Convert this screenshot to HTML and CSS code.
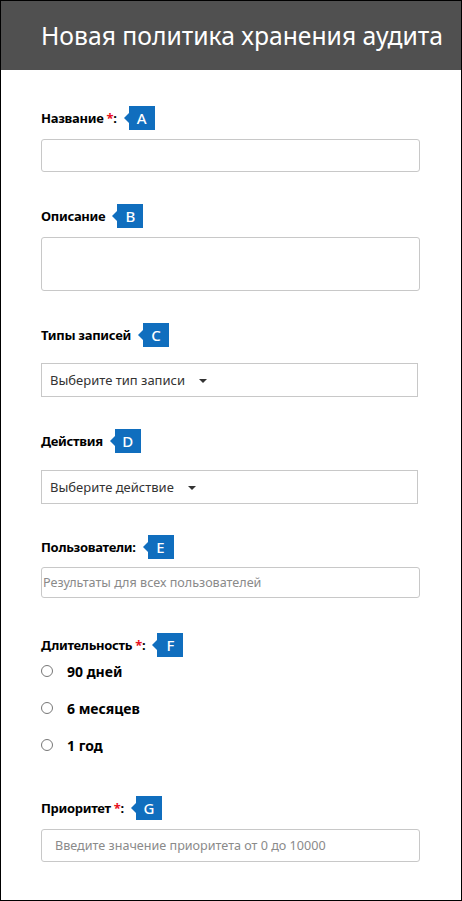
FILE: index.html
```html
<!DOCTYPE html>
<html lang="ru">
<head>
<meta charset="utf-8">
<title>Новая политика хранения аудита</title>
<link rel="stylesheet" href="styles.css">
</head>
<body>
<div class="frame">
  <header class="header"><h1 class="title">Новая политика хранения аудита</h1></header>
  <main class="form">
    <section class="field f-name">
      <div class="label-row"><span class="label">Название <span class="req">*</span>:</span><span class="badge">A</span></div>
      <div class="input"></div>
    </section>
    <section class="field f-desc">
      <div class="label-row"><span class="label">Описание</span><span class="badge">B</span></div>
      <div class="input textarea"></div>
    </section>
    <section class="field f-types">
      <div class="label-row"><span class="label">Типы записей</span><span class="badge">C</span></div>
      <div class="select"><span>Выберите тип записи</span><span class="caret"></span></div>
    </section>
    <section class="field f-actions">
      <div class="label-row"><span class="label">Действия</span><span class="badge">D</span></div>
      <div class="select"><span>Выберите действие</span><span class="caret"></span></div>
    </section>
    <section class="field f-users">
      <div class="label-row"><span class="label">Пользователи:</span><span class="badge">E</span></div>
      <div class="input users"><span class="ph">Результаты для всех пользователей</span></div>
    </section>
    <section class="field f-dur">
      <div class="label-row"><span class="label">Длительность <span class="req">*</span>:</span><span class="badge">F</span></div>
      <div class="radios">
        <div class="radio"><span class="circle"></span><span>90 дней</span></div>
        <div class="radio"><span class="circle"></span><span>6 месяцев</span></div>
        <div class="radio"><span class="circle"></span><span>1 год</span></div>
      </div>
    </section>
    <section class="field f-prio">
      <div class="label-row"><span class="label">Приоритет <span class="req">*</span>:</span><span class="badge">G</span></div>
      <div class="input prio"><span class="ph">Введите значение приоритета от 0 до 10000</span></div>
    </section>
  </main>
</div>
</body>
</html>
```
FILE: styles.css
```css
html, body { margin: 0; padding: 0; background: #fff; }
body { font-family: "Noto Sans", "Open Sans", sans-serif; color: #000; }
.frame {
  width: 462px; height: 901px; box-sizing: border-box;
  border: 1px solid #000; overflow: hidden;
}
.header {
  height: 69px; background: #505050; display: flex; align-items: center;
  padding-left: 40px; box-sizing: border-box;
}
.title {
  margin: 0; color: #fff; font-weight: 400; font-size: 24.7px; line-height: 1;
  padding-top: 2px; white-space: nowrap;
}
.form { padding: 0 0 0 40px; }
.field { display: flex; flex-direction: column; }
.label-row { display: flex; align-items: center; height: 24px; }
.label { font-size: 13px; font-weight: 700; letter-spacing: -0.3px; }
.req { color: #e81123; }
.badge {
  display: flex; align-items: center; justify-content: center;
  width: 26px; height: 24px; background: #106ebe; color: #fff;
  font-size: 15px; font-weight: 500; margin-left: 12px; position: relative;
}
.badge::before {
  content: ""; position: absolute; left: -5px; top: 7px;
  border-right: 5px solid #106ebe; border-top: 5px solid transparent; border-bottom: 5px solid transparent;
}
.input {
  width: 379px; height: 33px; box-sizing: border-box;
  border: 1px solid #c8c8c8; border-radius: 3px;
  display: flex; align-items: center;
}
.textarea { height: 54px; }
.select {
  width: 377px; height: 34px; box-sizing: border-box;
  border: 1px solid #c8c8c8; display: flex; align-items: center;
  padding-left: 8px; font-size: 13px; color: #333;
}
.caret {
  margin-left: 14px; margin-top: 1px;
  border-top: 4px solid #333; border-left: 4px solid transparent; border-right: 4px solid transparent;
}
.ph { font-size: 12.6px; color: #8a8a8a; }
.users { height: 31px; padding-left: 1px; }
.prio { padding-left: 13px; }
.f-name { margin-top: 36px; }
.f-name .input { margin-top: 9px; }
.f-desc { margin-top: 32px; }
.f-desc .input { margin-top: 9px; }
.f-types { margin-top: 32px; }
.f-types .select { margin-top: 16px; }
.f-actions { margin-top: 32px; }
.f-actions .select { margin-top: 17px; }
.f-users { margin-top: 31px; }
.f-users .input { margin-top: 8px; }
.f-dur { margin-top: 35px; }
.radios { display: flex; flex-direction: column; gap: 9px; }
.radio { display: flex; align-items: center; height: 28px; font-size: 14px; font-weight: 700; }
.circle {
  width: 12px; height: 12px; box-sizing: border-box; border: 1px solid #777;
  border-radius: 50%; margin-right: 14px;
}
.f-prio { margin-top: 37px; }
.f-prio .input { margin-top: 9px; }
```
